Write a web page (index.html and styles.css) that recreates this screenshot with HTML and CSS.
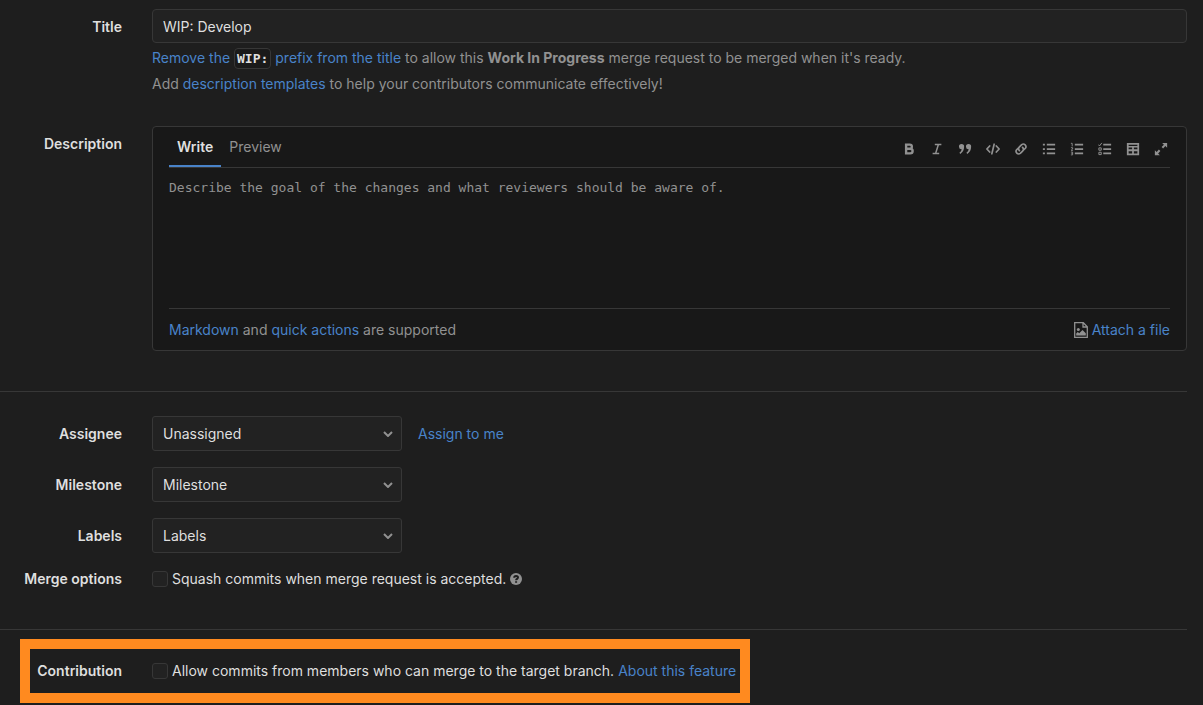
FILE: index.html
```html
<!DOCTYPE html>
<html lang="en">
<head>
<meta charset="utf-8">
<title>New merge request</title>
<meta name="viewport" content="width=device-width, initial-scale=1">
<link rel="stylesheet" href="styles.css">
</head>
<body>
<form class="form">
  <div class="row title-row">
    <label class="label" for="title">Title</label>
    <div>
      <input class="text-input" id="title" type="text" value="WIP: Develop">
      <div class="help-list">
        <p class="help"><a href="#">Remove the <code class="code">WIP:</code> prefix from the title</a> to allow this <strong>Work In Progress</strong> merge request to be merged when it's ready.</p>
        <p class="help">Add <a href="#">description templates</a> to help your contributors communicate effectively!</p>
      </div>
    </div>
  </div>

  <div class="row description-row">
    <label class="label" for="description">Description</label>
    <div class="editor">
      <div class="editor-head">
        <div class="tabs">
          <button class="tab active" type="button">Write</button>
          <button class="tab" type="button">Preview</button>
        </div>
        <div class="toolbar">
          <button class="tool" type="button" aria-label="Bold"><svg viewBox="0 0 16 16"><path fill="none" stroke="currentColor" stroke-width="2.7" d="M4.700 3H8.900a2.300 2.300 0 0 1 0 4.700H4.700zM4.700 7.700H9.500a2.600 2.600 0 0 1 0 5.300H4.700z"/></svg></button>
          <button class="tool" type="button" aria-label="Italic"><svg viewBox="0 0 16 16"><path fill="none" stroke="currentColor" stroke-width="1.7" d="M5.5 2.8H13M3 13.2h7.5M9.6 2.8L6.4 13.2"/></svg></button>
          <button class="tool" type="button" aria-label="Quote"><svg viewBox="0 0 16 16"><path d="M4 2.2A3 3 0 0 1 7 5.4c0 3.6-1.6 6.500-4.400 8.200L1.600 12.300C3 11.200 3.900 9.800 4.200 8.200A3 3 0 1 1 4 2.200zM12 2.200a3 3 0 0 1 3 3.200c0 3.600-1.600 6.500-4.400 8.200L9.600 12.300c1.400-1.100 2.300-2.500 2.600-4.100A3 3 0 1 1 12 2.200z"/></svg></button>
          <button class="tool" type="button" aria-label="Code"><svg viewBox="0 0 16 16"><path fill="none" stroke="currentColor" stroke-width="1.9" stroke-linecap="round" stroke-linejoin="round" d="M4.200 4.500L1 8l3.200 3.500M11.800 4.500L15 8l-3.200 3.500M9.300 2.500L6.700 13.500"/></svg></button>
          <button class="tool" type="button" aria-label="Link"><svg viewBox="0 0 16 16"><path fill="none" stroke="currentColor" stroke-width="1.9" stroke-linecap="round" d="M6.200 9.800a3 3 0 0 1 0-4.200l2.600-2.600a3 3 0 0 1 4.200 4.200l-1.400 1.400M9.800 6.200a3 3 0 0 1 0 4.200L7.200 13A3 3 0 0 1 3 8.800l1.400-1.400"/></svg></button>
          <button class="tool" type="button" aria-label="Bulleted list"><svg viewBox="0 0 16 16"><path d="M1 2h2.300v2H1zM1 7h2.300v2H1zM1 12h2.300v2H1zM5.500 2H15v2H5.500zM5.500 7H15v2H5.500zM5.500 12H15v2H5.500z"/></svg></button>
          <button class="tool" type="button" aria-label="Numbered list"><svg viewBox="0 0 16 16"><path d="M5.500 2H15v2H5.500zM5.500 7H15v2H5.500zM5.500 12H15v2H5.500z"/><path fill="none" stroke="currentColor" d="M1 1.500h1.500V5M1 6.500h2V8L1.300 9.500h2.200M1 11.500h2v3.200H1M1.500 13H3"/></svg></button>
          <button class="tool" type="button" aria-label="Task list"><svg viewBox="0 0 16 16"><path d="M6 2h9v2H6zM6 7h9v2H6zM6 12h9v2H6z"/><path fill="none" stroke="currentColor" stroke-width="1.100" d="M.5 3l1.200 1.500L4.400 1M1 6.700h2.700v2.700H1zM1 11.700h2.700v2.700H1z"/></svg></button>
          <button class="tool" type="button" aria-label="Table"><svg viewBox="0 0 16 16"><path fill-rule="evenodd" d="M1 1h14v14H1zM3 3v1.600h10V3zM3 6.400v2h4v-2zM9 6.400v2h4v-2zM3 10.600v2.400h4v-2.400zM9 10.600v2.400h4v-2.400z"/></svg></button>
          <button class="tool" type="button" aria-label="Full screen"><svg viewBox="0 0 16 16"><path d="M9.300 1H15v5.700l-2-2-2.600 2.600-1.700-1.700L11.300 3zM1 9.300l2 2 2.600-2.600 1.700 1.700L4.700 13l2 2H1z"/></svg></button>
        </div>
      </div>
      <textarea class="textarea" id="description" placeholder="Describe the goal of the changes and what reviewers should be aware of."></textarea>
      <div class="editor-foot">
        <span><a href="#">Markdown</a> and <a href="#">quick actions</a> are supported</span>
        <button class="attach" type="button"><svg class="attach-icon" viewBox="0 0 14 16"><path fill="none" stroke="currentColor" stroke-width="1.300" d="M.7.700h8.600l4 4v10.600H.7zM9 .700V5h4.300"/><circle cx="4.300" cy="7.500" r="1.500"/><path d="M2.200 13.500v-2l1.600-1.500 1.400 1.200L8.500 8l3.300 3.300v2.200z"/></svg>Attach a file</button>
      </div>
    </div>
  </div>

  <div class="section">
    <div class="row">
      <label class="label" for="assignee">Assignee</label>
      <div class="field">
        <div class="select-wrap"><select class="select" id="assignee"><option>Unassigned</option></select><svg class="chevron" viewBox="0 0 10 6"><path d="M1 1l4 4 4-4"/></svg></div>
        <a href="#">Assign to me</a>
      </div>
    </div>
    <div class="row">
      <label class="label" for="milestone">Milestone</label>
      <div class="field">
        <div class="select-wrap"><select class="select" id="milestone"><option>Milestone</option></select><svg class="chevron" viewBox="0 0 10 6"><path d="M1 1l4 4 4-4"/></svg></div>
      </div>
    </div>
    <div class="row">
      <label class="label" for="labels">Labels</label>
      <div class="field">
        <div class="select-wrap"><select class="select" id="labels"><option>Labels</option></select><svg class="chevron" viewBox="0 0 10 6"><path d="M1 1l4 4 4-4"/></svg></div>
      </div>
    </div>
    <div class="row">
      <span class="label">Merge options</span>
      <div class="check">
        <input class="checkbox" id="squash" type="checkbox">
        <label for="squash">Squash commits when merge request is accepted.</label>
        <svg class="question" viewBox="0 0 12 12"><circle cx="6" cy="6" r="6"/><path d="M4.200 4.700C4.200 2.300 8 2.400 8 4.600 8 5.800 6.100 5.900 6.100 7.200M6.100 8.300v1.400"/></svg>
      </div>
    </div>
  </div>

  <div class="section contribution">
    <div class="highlight">
      <span class="label">Contribution</span>
      <div class="check">
        <input class="checkbox" id="allow" type="checkbox">
        <label for="allow">Allow commits from members who can merge to the target branch.</label>
        <a href="#">About this feature</a>
      </div>
    </div>
  </div>
</form>
</body>
</html>
```
FILE: styles.css
```css
* {
  box-sizing: border-box;
}

body {
  margin: 0;
  background: #1e1e1e;
  color: #dfdfdf;
  font: 14px/20px Inter, "Liberation Sans", sans-serif;
}

a {
  color: #4983c9;
  text-decoration: none;
}

button,
input,
select,
textarea {
  font: inherit;
  color: inherit;
}

button {
  padding: 0;
  border: 0;
  background: none;
  cursor: pointer;
}

svg {
  fill: currentColor;
}

.form {
  padding: 9px 16px 0 0;
}

.row {
  display: grid;
  grid-template-columns: 122px minmax(0, 1fr);
  column-gap: 30px;
  align-items: center;
}

.label {
  font-weight: 600;
  text-align: right;
}

.title-row,
.description-row {
  align-items: start;
}

.title-row .label,
.description-row .label {
  padding-top: 8px;
}

.description-row {
  margin-top: 32px;
}

.text-input {
  display: block;
  width: 100%;
  height: 34px;
  padding: 0 10px;
  border: 1px solid #373737;
  border-radius: 4px;
  background: #222;
}

.help-list {
  display: grid;
  row-gap: 6px;
  margin-top: 5px;
}

.help {
  margin: 0;
  color: #919191;
}

.code {
  padding: 2px;
  border: 1px solid #373737;
  border-radius: 4px;
  background: #1a1a1a;
  color: #dfdfdf;
  font: bold 13px/14px "DejaVu Sans Mono", monospace;
}

.editor {
  padding: 0 16px;
  border: 1px solid #373737;
  border-radius: 4px;
  background: #181818;
  color: #919191;
}

.editor-head {
  display: flex;
  justify-content: space-between;
  border-bottom: 1px solid #373737;
}

.tabs {
  display: flex;
}

.tab {
  height: 40px;
  padding: 2px 8px 0;
  border-bottom: 2px solid transparent;
}

.tab.active {
  border-color: #4983c9;
  color: #dfdfdf;
  font-weight: 600;
}

.toolbar {
  display: flex;
  align-items: center;
  gap: 14px;
  padding: 4px 2px 0 0;
}

.tool {
  width: 14px;
  height: 14px;
}

.tool svg {
  display: block;
}

.textarea {
  display: block;
  width: 100%;
  height: 140px;
  padding: 10px 0;
  border: 0;
  background: none;
  resize: none;
  font: 13px/20px "DejaVu Sans Mono", monospace;
}

.textarea::placeholder {
  color: #919191;
}

.editor-foot {
  display: flex;
  align-items: center;
  justify-content: space-between;
  height: 42px;
  border-top: 1px solid #373737;
}

.attach {
  display: flex;
  align-items: center;
  gap: 4px;
  color: #4983c9;
}

.attach-icon {
  width: 14px;
  height: 16px;
  color: #919191;
}

.section {
  display: grid;
  row-gap: 16px;
  margin-top: 40px;
  padding-top: 24px;
  border-top: 1px solid #373737;
}

.field {
  display: flex;
  align-items: center;
  gap: 16px;
}

.select-wrap {
  position: relative;
  width: 250px;
}

.select {
  display: block;
  width: 100%;
  height: 35px;
  padding: 0 10px;
  border: 1px solid #373737;
  border-radius: 3px;
  background: #222;
  appearance: none;
}

.chevron {
  position: absolute;
  top: 15px;
  right: 9px;
  width: 10px;
  height: 6px;
  fill: none;
  stroke: #919191;
  stroke-width: 2;
  pointer-events: none;
}

.check {
  display: flex;
  align-items: center;
  gap: 4px;
}

.checkbox {
  width: 16px;
  height: 16px;
  margin: 0;
  border: 1px solid #373737;
  border-radius: 3px;
  background: #222;
  appearance: none;
}

.question {
  width: 12px;
  height: 12px;
  color: #919191;
}

.question path {
  fill: none;
  stroke: #1e1e1e;
  stroke-width: 2;
}

.contribution {
  padding-top: 9px;
}

.highlight {
  display: grid;
  grid-template-columns: 92px auto;
  column-gap: 30px;
  align-items: center;
  justify-self: start;
  height: 64px;
  margin-left: 20px;
  padding-right: 4px;
  border: 10px solid #ff8a1f;
}
```
